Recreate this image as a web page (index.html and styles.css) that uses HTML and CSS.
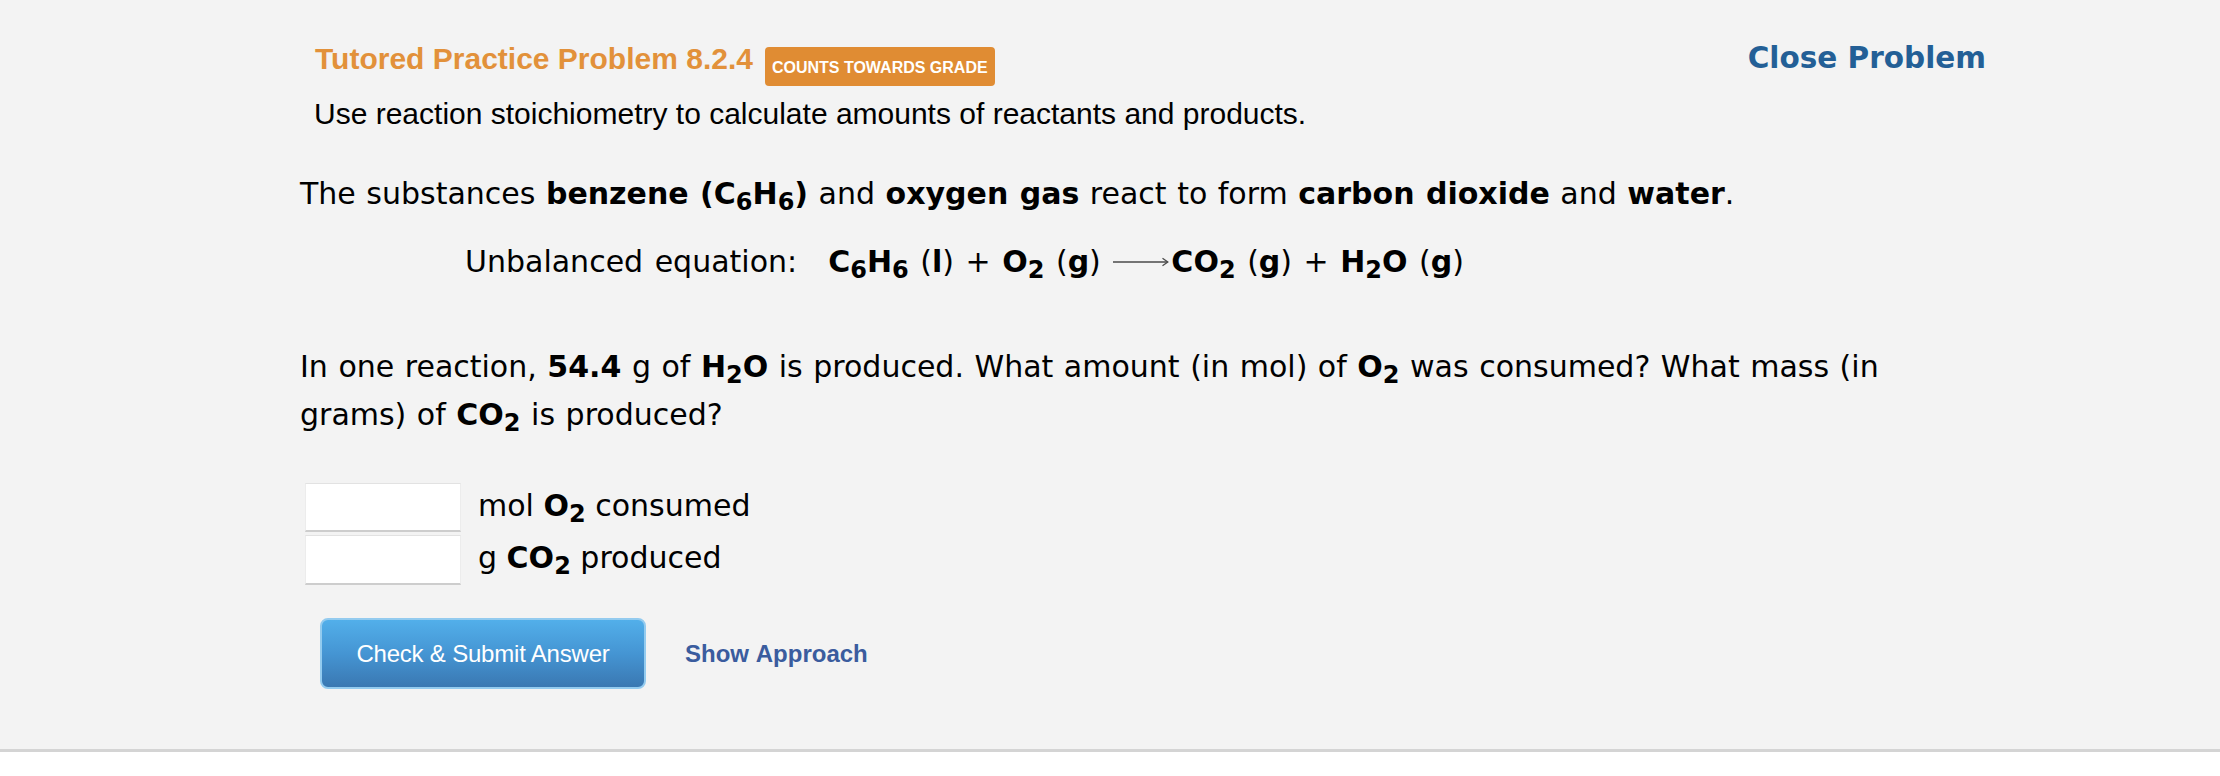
FILE: index.html
```html
<!DOCTYPE html>
<html>
<head>
<meta charset="utf-8">
<title>Tutored Practice Problem 8.2.4</title>
<link rel="stylesheet" href="styles.css">
</head>
<body>
<div class="page">
  <div class="container">
    <div class="header">
      <div class="title-row">
        <span class="title">Tutored Practice Problem 8.2.4</span>
        <span class="badge">COUNTS TOWARDS GRADE</span>
      </div>
      <a class="close">Close Problem</a>
    </div>
    <p class="subtitle">Use reaction stoichiometry to calculate amounts of reactants and products.</p>
    <div class="problem">
      <p class="intro">The substances <b>benzene (C<sub>6</sub>H<sub>6</sub>)</b> and <b>oxygen gas</b> react to form <b>carbon dioxide</b> and <b>water</b>.</p>
      <p class="equation"><span class="eq-label">Unbalanced equation:</span><b>C<sub>6</sub>H<sub>6</sub></b> (<b>l</b>) + <b>O<sub>2</sub></b> (<b>g</b>) <svg class="arrow" viewBox="0 0 57 14" width="57" height="14"><path d="M1 7H55.5" stroke="#4a4a4a" stroke-width="1.4" fill="none"/><path d="M50.5 3.2L55.8 7L50.5 10.8" stroke="#4a4a4a" stroke-width="1.3" fill="none"/></svg><b>CO<sub>2</sub></b> (<b>g</b>) + <b>H<sub>2</sub>O</b> (<b>g</b>)</p>
      <p class="question"><span>In one reaction, </span><b>54.4</b><span> g of </span><b>H<sub>2</sub>O</b><span> is produced. What amount (in mol) of </span><b>O<sub>2</sub></b><span> was consumed? What mass (in </span><span>grams) of </span><b>CO<sub>2</sub></b><span> is produced?</span></p>
      <div class="answers">
        <div class="inputs">
          <input class="answer-input" type="text">
          <input class="answer-input answer-input-tall" type="text">
        </div>
        <div class="labels">
          <div class="label">mol <b>O<sub>2</sub></b> consumed</div>
          <div class="label">g <b>CO<sub>2</sub></b> produced</div>
        </div>
      </div>
      <div class="actions">
        <button class="submit" type="button">Check &amp; Submit Answer</button>
        <a class="approach">Show Approach</a>
      </div>
    </div>
  </div>
</div>
</body>
</html>
```
FILE: styles.css
```css
html, body {
  margin: 0;
  padding: 0;
  background: #ffffff;
}

.page {
  height: 710px;
  padding-top: 39px;
  background: #f3f3f3;
  border-bottom: 3px solid #d4d4d4;
}

.container {
  margin-left: 300px;
  width: 1690px;
}

.header {
  display: flex;
  justify-content: space-between;
  align-items: flex-start;
  height: 40px;
  padding-left: 15px;
  padding-right: 4px;
}

.title-row {
  display: flex;
  align-items: flex-start;
}

.title {
  font-family: "Liberation Sans", Arial, sans-serif;
  font-weight: bold;
  font-size: 30px;
  line-height: 40px;
  color: #e2913a;
}

.badge {
  margin-top: 8px;
  margin-left: 12px;
  height: 37px;
  padding: 2px 7px 0;
  border-radius: 4px;
  background: #e08c33;
  color: #ffffff;
  font-family: "Liberation Sans", Arial, sans-serif;
  font-weight: bold;
  font-size: 16px;
  line-height: 37px;
}

.close {
  margin-top: -1px;
  font-family: "DejaVu Sans", Verdana, sans-serif;
  font-weight: bold;
  font-size: 29.5px;
  line-height: 40px;
  color: #235f96;
  cursor: pointer;
}

.subtitle {
  margin: 15px 0 0;
  padding-left: 14px;
  font-family: "Liberation Sans", Arial, sans-serif;
  font-size: 30px;
  line-height: 40px;
  color: #000000;
}

.problem {
  font-family: "DejaVu Sans", Verdana, sans-serif;
  font-size: 30px;
  word-spacing: 1px;
  color: #000000;
}

.problem p {
  margin: 0;
}

.problem sub {
  font-size: 0.8em;
  line-height: 0;
  vertical-align: -0.24em;
}

.intro {
  margin-top: 40px !important;
  line-height: 40px;
}

.equation {
  margin-top: 28px !important;
  padding-left: 165px;
  line-height: 40px;
  word-spacing: 2px;
}

.eq-label {
  margin-right: 31px;
}

.arrow {
  vertical-align: 3px;
  margin-right: 2px;
}

.question {
  margin-top: 61px !important;
  max-width: 1640px;
  line-height: 48px;
}

.answers {
  display: flex;
  margin-top: 44px;
  padding-left: 5px;
}

.inputs {
  display: flex;
  flex-direction: column;
  gap: 3px;
}

.answer-input {
  box-sizing: border-box;
  width: 156px;
  height: 49px;
  margin: 0;
  padding: 0 8px;
  background: #ffffff;
  border-top: 1px solid #e2e2e2;
  border-left: 1px solid #ececec;
  border-right: 1px solid #ececec;
  border-bottom: 2px solid #cdcdcd;
  border-radius: 0;
  outline: none;
  font-family: "DejaVu Sans", Verdana, sans-serif;
  font-size: 24px;
}

.answer-input-tall {
  height: 50px;
}

.labels {
  margin-top: -3px;
  margin-left: 17px;
  line-height: 52px;
  word-spacing: 0;
}

.actions {
  display: flex;
  align-items: center;
  margin-top: 33px;
  padding-left: 20px;
}

.submit {
  box-sizing: border-box;
  width: 326px;
  height: 71px;
  margin: 0;
  padding: 0;
  border: 2px solid #93cbef;
  border-radius: 8px;
  background: linear-gradient(to bottom, #52afea 0%, #4595d3 50%, #3a78b2 100%);
  color: #ffffff;
  font-family: "Liberation Sans", Arial, sans-serif;
  font-size: 24px;
  letter-spacing: -0.2px;
  cursor: pointer;
}

.approach {
  margin-left: 39px;
  font-family: "Liberation Sans", Arial, sans-serif;
  font-weight: bold;
  font-size: 24px;
  color: #3a5c9e;
  cursor: pointer;
}
```
